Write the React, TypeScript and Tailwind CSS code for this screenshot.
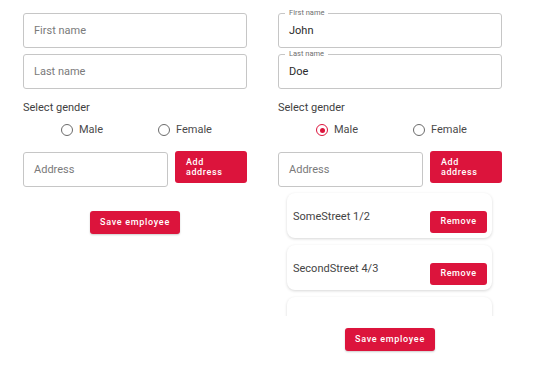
import React from "react";

const font = { fontFamily: "Roboto, 'Liberation Sans', sans-serif" };

function EmptyField({ placeholder }: { placeholder: string }) {
  return (
    <div className="h-[35px] w-full rounded-[3px] border border-[#c6c6c6] flex items-center pl-[10px] pt-[2px] text-[11px] text-[#7a7a7a]">
      {placeholder}
    </div>
  );
}

function FilledField({ label, value }: { label: string; value: string }) {
  return (
    <div className="relative h-[35px] w-full rounded-[3px] border border-[#c6c6c6] flex items-center pl-[10px] pt-[2px] text-[11px] text-[#2a2a2a]">
      <span className="absolute left-[6px] top-[-6px] bg-white px-[4px] text-[7.5px] leading-[10px] text-[#6f6f6f]">
        {label}
      </span>
      {value}
    </div>
  );
}

function Radio({ label, checked }: { label: string; checked?: boolean }) {
  return (
    <div className="flex items-center gap-[6px] text-[11px] text-[#4a4a4a] leading-[14px]">
      <span
        className={
          checked
            ? "w-[12px] h-[12px] rounded-full border-[1.5px] border-[#dc143c] flex items-center justify-center"
            : "w-[12px] h-[12px] rounded-full border-[1.5px] border-[#6b6b6b]"
        }
      >
        {checked && <span className="w-[5px] h-[5px] rounded-full bg-[#dc143c]" />}
      </span>
      {label}
    </div>
  );
}

function Gender({ male }: { male?: boolean }) {
  return (
    <>
      <div className="mt-[12px] text-[11px] leading-[14px] text-[#3f3f3f]">Select gender</div>
      <div className="mt-[8px] flex pl-[38px]">
        <div className="w-[97px]">
          <Radio label="Male" checked={male} />
        </div>
        <Radio label="Female" />
      </div>
    </>
  );
}

function AddressRow() {
  return (
    <div className="mt-[14px] flex items-start gap-[7px]">
      <div className="w-[145px] mt-[1px]">
        <EmptyField placeholder="Address" />
      </div>
      <button className="w-[72px] h-[32px] rounded-[3px] bg-[#dc143c] text-white text-[9px] font-medium tracking-[0.6px] leading-[10px] text-left pl-[11px]">
        Add
        <br />
        address
      </button>
    </div>
  );
}

function SaveButton() {
  return (
    <button className="self-center w-[90px] h-[23px] rounded-[3px] bg-[#dc143c] text-white text-[9px] font-medium tracking-[0.7px] shadow-[0_1px_2px_rgba(0,0,0,0.2)]">
      Save employee
    </button>
  );
}

function AddressCard({ text }: { text?: string }) {
  return (
    <div className="h-[45px] shrink-0 rounded-[8px] bg-white shadow-[0_1px_3px_rgba(0,0,0,0.16)] flex items-start justify-between pl-[6px] pr-[5px]">
      {text && (
        <>
          <span className="mt-[17px] text-[11px] leading-[14px] text-[#444]">{text}</span>
          <button className="mt-[18px] w-[57px] h-[22px] rounded-[3px] bg-[#dc143c] text-white text-[9px] font-medium tracking-[0.6px]">
            Remove
          </button>
        </>
      )}
    </div>
  );
}

export default function App() {
  return (
    <div className="w-[543px] h-[382px] bg-white flex gap-[31px] pt-[13px] pl-[23px]" style={font}>
      <div className="w-[224px] flex flex-col">
        <EmptyField placeholder="First name" />
        <div className="mt-[6px]">
          <EmptyField placeholder="Last name" />
        </div>
        <Gender />
        <AddressRow />
        <div className="mt-[24px] flex flex-col">
          <SaveButton />
        </div>
      </div>

      <div className="w-[224px] flex flex-col">
        <FilledField label="First name" value="John" />
        <div className="mt-[6px]">
          <FilledField label="Last name" value="Doe" />
        </div>
        <Gender male />
        <AddressRow />
        <div className="mt-[1px] h-[128px] overflow-hidden pt-[5px] pl-[9px] pr-[10px] flex flex-col gap-[7px]">
          <AddressCard text="SomeStreet 1/2" />
          <AddressCard text="SecondStreet 4/3" />
          <AddressCard />
        </div>
        <div className="mt-[12px] flex flex-col">
          <SaveButton />
        </div>
      </div>
    </div>
  );
}
